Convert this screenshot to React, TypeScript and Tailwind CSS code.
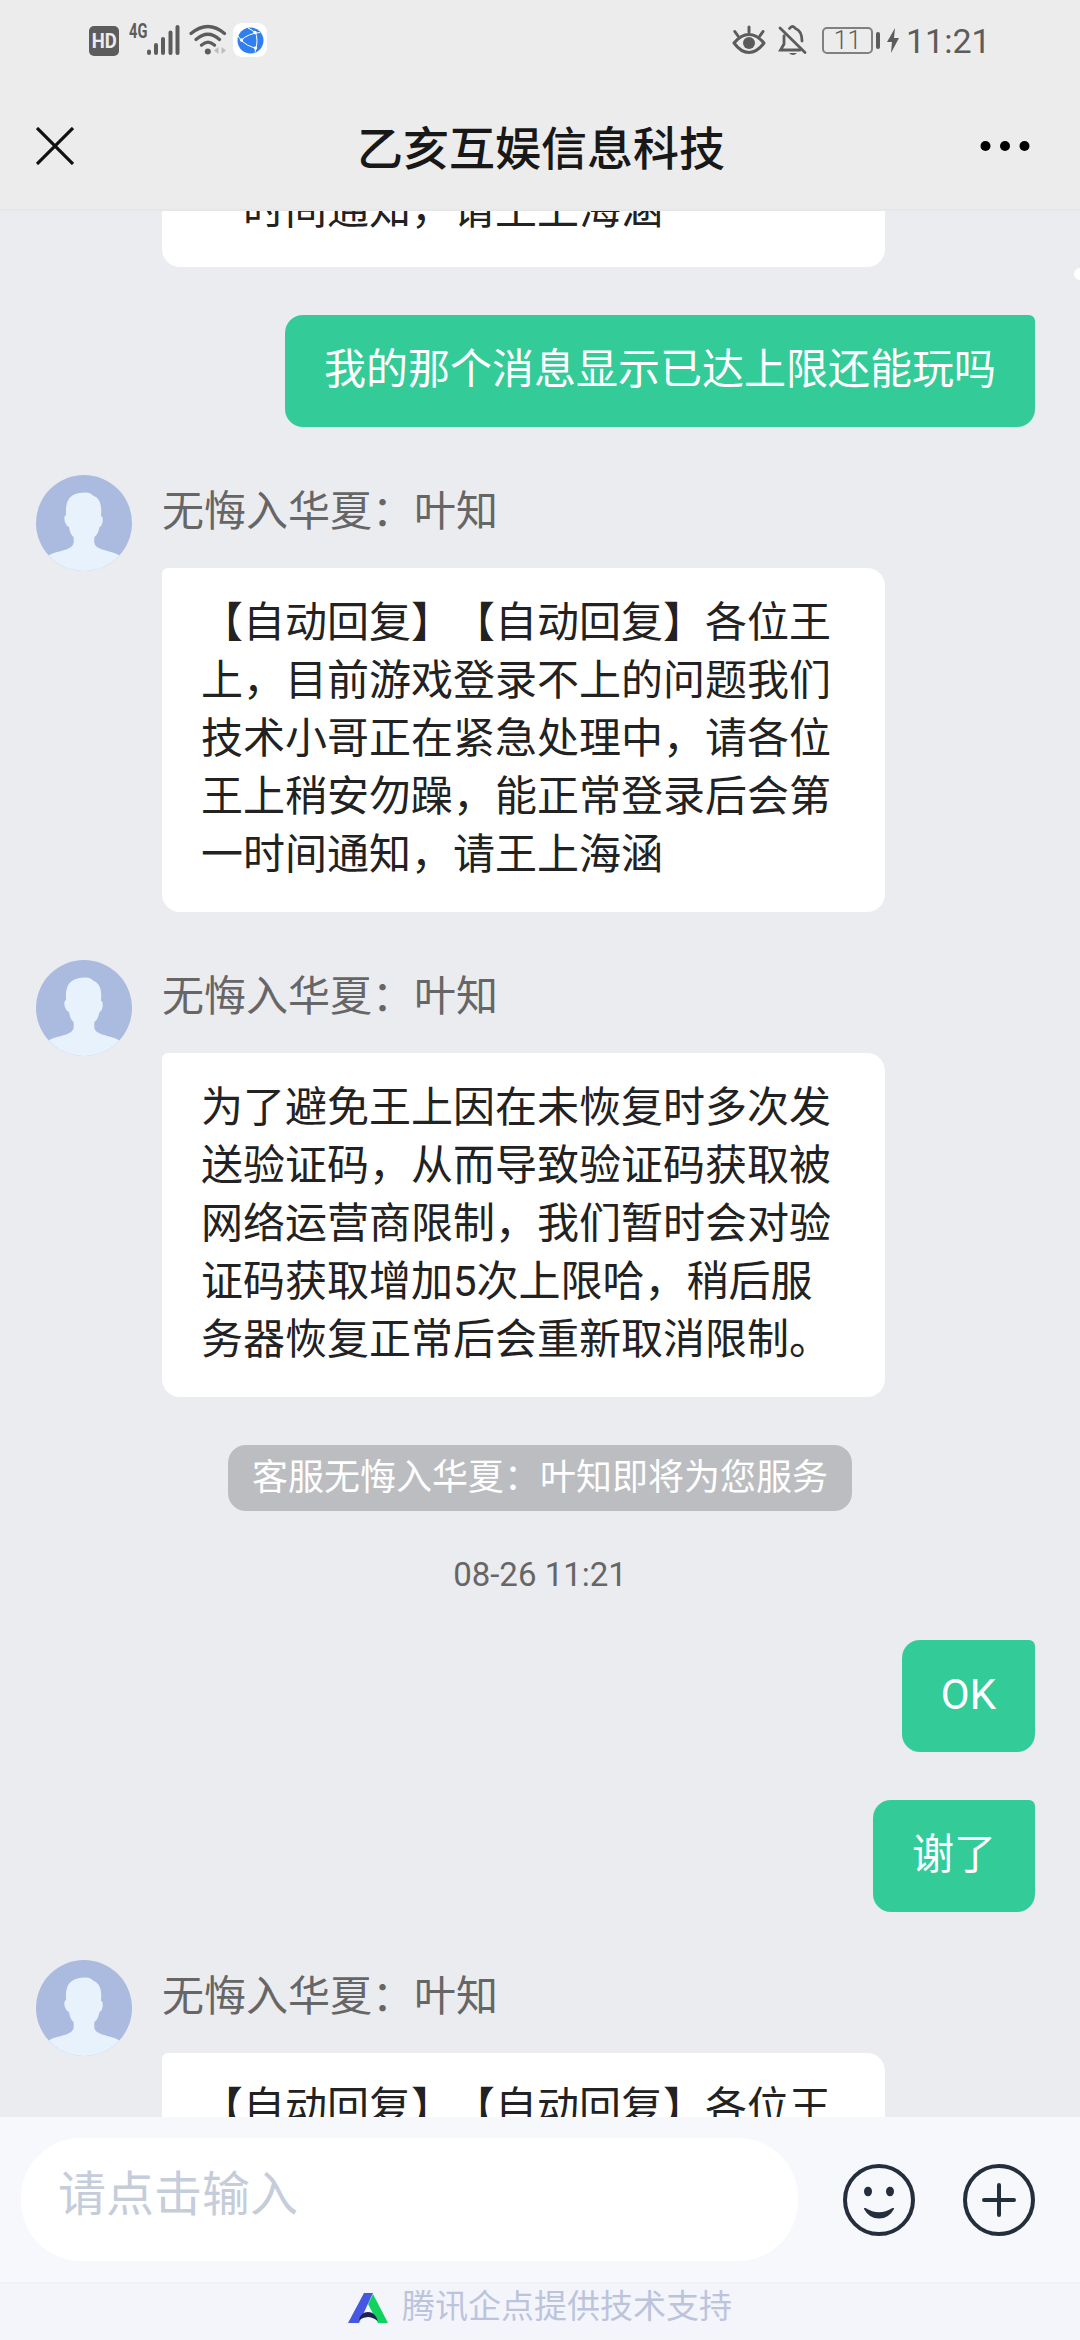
import React from 'react';

type ChatItem =
  | { type: 'agent'; lines: string[]; tail?: boolean }
  | { type: 'user'; text: string }
  | { type: 'notice'; text: string }
  | { type: 'time'; text: string };

const AGENT_NAME = '无悔入华夏：叶知';

const autoReply = [
  '【自动回复】【自动回复】各位王',
  '上，目前游戏登录不上的问题我们',
  '技术小哥正在紧急处理中，请各位',
  '王上稍安勿躁，能正常登录后会第',
  '一时间通知，请王上海涵',
];

const items: ChatItem[] = [
  { type: 'agent', lines: autoReply.slice(-1), tail: true },
  { type: 'user', text: '我的那个消息显示已达上限还能玩吗' },
  { type: 'agent', lines: autoReply },
  {
    type: 'agent',
    lines: [
      '为了避免王上因在未恢复时多次发',
      '送验证码，从而导致验证码获取被',
      '网络运营商限制，我们暂时会对验',
      '证码获取增加5次上限哈，稍后服',
      '务器恢复正常后会重新取消限制。',
    ],
  },
  { type: 'notice', text: '客服无悔入华夏：叶知即将为您服务' },
  { type: 'time', text: '08-26 11:21' },
  { type: 'user', text: 'OK' },
  { type: 'user', text: '谢了' },
  { type: 'agent', lines: autoReply.slice(0, 1) },
];

const StatusBar: React.FC = () => (
  <div className="flex h-20 shrink-0 items-start justify-between pl-[89px] pr-[92px] pt-[22px] text-[#5c5c5c]">
    <div className="flex h-9 items-start">
      <div className="mt-1 flex h-[30px] w-[30px] items-center justify-center rounded-[5px] bg-[#5c5c5c] text-[#ececec]">
        <span className="scale-x-[0.88] font-[Roboto] text-[21px] leading-none font-bold">HD</span>
      </div>
      <span className="ml-[10px] w-[18px] origin-left scale-x-[0.73] font-[Roboto] text-[20px] leading-[19px] font-bold">4G</span>
      <svg className="mt-[2px] h-8 w-[33px]" viewBox="0 0 33 32" stroke="currentColor" strokeWidth="4" strokeLinecap="round">
        <path d="M2 27.5v1.500M9 21v8M16 15v14M23.500 8.500v20.500M30.500 3v26" />
      </svg>
      <svg className="ml-[9px] mt-[2px] h-8 w-[38px]" viewBox="0 0 38 32" fill="none" stroke="currentColor" strokeWidth="3.2" strokeLinecap="round">
        <path d="M2 9.500Q19 -4.500 35.500 9.500M7 15.500Q19 5 30.500 15.500M12.500 21.200Q19 15 25.500 21.200" />
        <circle cx="18.800" cy="27.500" r="3" fill="currentColor" stroke="none" />
        <path d="M29.500 23v7l-4.500-3.500zM32.500 23v7l4.500-3.500z" fill="#bdbdbd" stroke="none" />
      </svg>
      <div className="ml-[6px] mt-[1px] flex h-[34px] w-[34px] items-center justify-center rounded-[9px] bg-white">
        <svg className="h-[27px] w-[27px]" viewBox="0 0 27 27" fill="none" stroke="#fff" strokeWidth="1">
          <circle cx="13.500" cy="13.500" r="13" fill="#2f80ee" stroke="none" />
          <path d="M4.500 13Q11 6.500 23 5.500M4 13.500Q10 19 19 21.500M18 4Q22 13 18 25M11 1Q15 3 18 5.500M1 9Q3 11 4 14" />
          <circle cx="4.500" cy="13" r="1.700" fill="#fff" stroke="none" />
          <circle cx="18" cy="5.500" r="1.700" fill="#fff" stroke="none" />
          <circle cx="18.500" cy="21" r="1.700" fill="#fff" stroke="none" />
        </svg>
      </div>
    </div>

    <div className="flex h-9 items-start">
      <svg className="mt-[2px] h-8 w-[34px]" viewBox="0 0 34 32" fill="none" stroke="currentColor" strokeWidth="3" strokeLinecap="round">
        <path d="M2 19Q9 10.500 17 10.500T32 19Q25 28.500 17 28.500T2 19Z" strokeLinejoin="round" />
        <circle cx="17" cy="19" r="6" fill="currentColor" stroke="none" />
        <path d="M17 3v5M2.800 7.500l3.200 4.500M31 7.500l-3.200 4.500" />
      </svg>
      <svg className="ml-[12px] mt-[2px] h-8 w-[30px]" viewBox="0 0 30 32" fill="none" stroke="currentColor" strokeWidth="2.8" strokeLinecap="round">
        <path d="M2 4l25 24.500M6 12v8l-3.500 6H22M11.500 4.500Q14.500 0.500 17.500 4.500Q24 7 24 17" />
        <path d="M11 29h8q-4 4-8 0z" fill="currentColor" stroke="none" />
      </svg>
      <div className="ml-[14px] mt-[5px] flex h-[27px] w-[51px] items-center justify-center rounded-[5px] border-2 border-[#808080] font-[Roboto] text-[25px] leading-none font-light">
        11
      </div>
      <div className="ml-[3px] mt-[10px] h-[17px] w-1 rounded-sm bg-[#5c5c5c]" />
      <svg className="ml-[7px] mt-[6px] h-[25px] w-3" viewBox="0 0 12 25" fill="currentColor">
        <path d="M8 0L0 14h5L4 25l8-15H7z" />
      </svg>
      <span className="ml-[7px] w-[82px] whitespace-nowrap font-[Roboto] text-[34px] leading-[38px]">11:21</span>
    </div>
  </div>
);

const Header: React.FC = () => (
  <header className="flex h-[131px] shrink-0 items-center border-b-2 border-[#e6e7e9] pl-9 pt-[3px]">
    <svg className="h-[38px] w-[38px]" viewBox="0 0 38 38" stroke="#111" strokeWidth="3.2">
      <path d="M1 1l36 36M37 1L1 37" />
    </svg>
    <h1 className="ml-[283px] w-[368px] pt-[5px] text-[46px] leading-[60px] font-medium whitespace-nowrap text-[#181818]">
      乙亥互娱信息科技
    </h1>
    <svg className="ml-[255px] h-[10px] w-[50px]" viewBox="0 0 50 10" fill="#000">
      <circle cx="5.500" cy="5" r="5" />
      <circle cx="25" cy="5" r="5" />
      <circle cx="44.500" cy="5" r="5" />
    </svg>
  </header>
);

const Avatar: React.FC = () => (
  <svg className="h-24 w-24 shrink-0 rounded-full" viewBox="0 0 96 96">
    <rect width="96" height="96" fill="#aabbdf" />
    <path
      d="M30 40C29 25 34 18 48 17.500C52 17 55 18 57 20.500C64 23 66 30 65 41C68 41 67 51 63.500 52C62.500 57 61 60 58.500 62C58 67 58 70 61 72C67 76 77 76 84 81V96H12V81C19 76 30 76 35 72C38 70 38 67 37.500 62C35 60 33.500 56 33 52C29 51 26.500 41 30 40Z"
      fill="#e8f2fd"
    />
  </svg>
);

const AgentBubble: React.FC<{ lines: string[] }> = ({ lines }) => (
  <div className="w-[723px] rounded-[18px] rounded-tl-[6px] bg-white px-[39px] pt-[26px] pb-[28px] text-[42px] leading-[58px] text-[#222]">
    {lines.map((line) => (
      <p key={line} className="whitespace-nowrap">{line}</p>
    ))}
  </div>
);

const AgentMessage: React.FC<{ lines: string[] }> = ({ lines }) => (
  <div className="flex items-start">
    <Avatar />
    <div className="ml-[30px]">
      <div className="h-[93px] pt-[8px] text-[42px] leading-[58px] text-[#666]">{AGENT_NAME}</div>
      <AgentBubble lines={lines} />
    </div>
  </div>
);

const ChatRow: React.FC<{ item: ChatItem }> = ({ item }) => {
  switch (item.type) {
    case 'agent':
      if (item.tail) {
        return (
          <div className="ml-[126px]">
            <AgentBubble lines={item.lines} />
          </div>
        );
      }
      return <AgentMessage lines={item.lines} />;
    case 'user':
      return (
        <div className="mr-[9px] self-end rounded-[18px] rounded-tr-[6px] bg-[#33cc99] px-[39px] pt-[26px] pb-[28px] text-[42px] leading-[58px] whitespace-nowrap text-white">
          {item.text}
        </div>
      );
    case 'notice':
      return (
        <div className="h-[66px] self-center rounded-[18px] bg-[#bbbdc1] px-6 text-[36px] leading-[66px] whitespace-nowrap text-white">
          {item.text}
        </div>
      );
    case 'time':
      return <div className="h-[33px] self-center text-[33px] leading-[31px] text-[#666]">{item.text}</div>;
  }
};

const InputBar: React.FC = () => (
  <div className="flex h-[165px] shrink-0 items-center bg-[#f6f8fc] pl-[21px] text-[#252e3d]">
    <div className="h-[123px] w-[777px] rounded-[60px] bg-white pl-[37px] text-[48px] leading-[113px] text-[#c5ccda]">请点击输入</div>
    <svg className="ml-[45px] h-[72px] w-[72px]" viewBox="0 0 72 72" fill="currentColor">
      <circle cx="36" cy="36" r="34" fill="none" stroke="currentColor" strokeWidth="4" />
      <ellipse cx="25" cy="27.500" rx="4" ry="4.800" />
      <ellipse cx="47" cy="27.500" rx="4" ry="4.800" />
      <path d="M21 45Q20.500 43.500 22.500 44Q36 52.500 49.500 44Q51.500 43.500 51 45Q46 54.500 36 54.500T21 45Z" />
    </svg>
    <svg className="ml-12 h-[72px] w-[72px]" viewBox="0 0 72 72" fill="none" stroke="currentColor" strokeWidth="4">
      <circle cx="36" cy="36" r="34" />
      <path d="M36 21v30M21 36h30" strokeLinecap="round" />
    </svg>
  </div>
);

const Footer: React.FC = () => (
  <footer className="flex h-[58px] shrink-0 items-start border-t-2 border-[#f0f2f7] bg-[#f3f5fb] pl-[348px]">
    <svg className="mt-[9px] h-[30px] w-10" viewBox="0 0 40 30">
      <path d="M16 0h9L11 30H0z" fill="#4657e2" />
      <path d="M25 1l15 29H30L20 11z" fill="#10d35f" />
      <path d="M11 27Q13 19 20 19T30 28Q24 24 20 24T11 27Z" fill="#1c2352" />
    </svg>
    <span className="ml-[14px] text-[33px] leading-[45px] text-[#bcc4dc]">腾讯企点提供技术支持</span>
  </footer>
);

const App: React.FC = () => (
  <div className="relative flex h-[2340px] w-[1080px] flex-col overflow-hidden bg-[#ececec] font-[Roboto,'Noto_Sans_CJK_SC',sans-serif] [text-spacing-trim:space-all]">
    <StatusBar />
    <Header />
    <main className="h-[1906px] shrink-0 overflow-hidden bg-[#ebecf0]">
      {/* list is scrolled so the first message is cut by the header */}
      <div className="-mt-[56px] flex flex-col gap-12 px-9">
        {items.map((item, index) => (
          <ChatRow key={index} item={item} />
        ))}
      </div>
    </main>
    <InputBar />
    <Footer />
    <div className="absolute top-[268px] left-[1074px] h-3 w-3 rounded-full bg-white" />
  </div>
);

export default App;
